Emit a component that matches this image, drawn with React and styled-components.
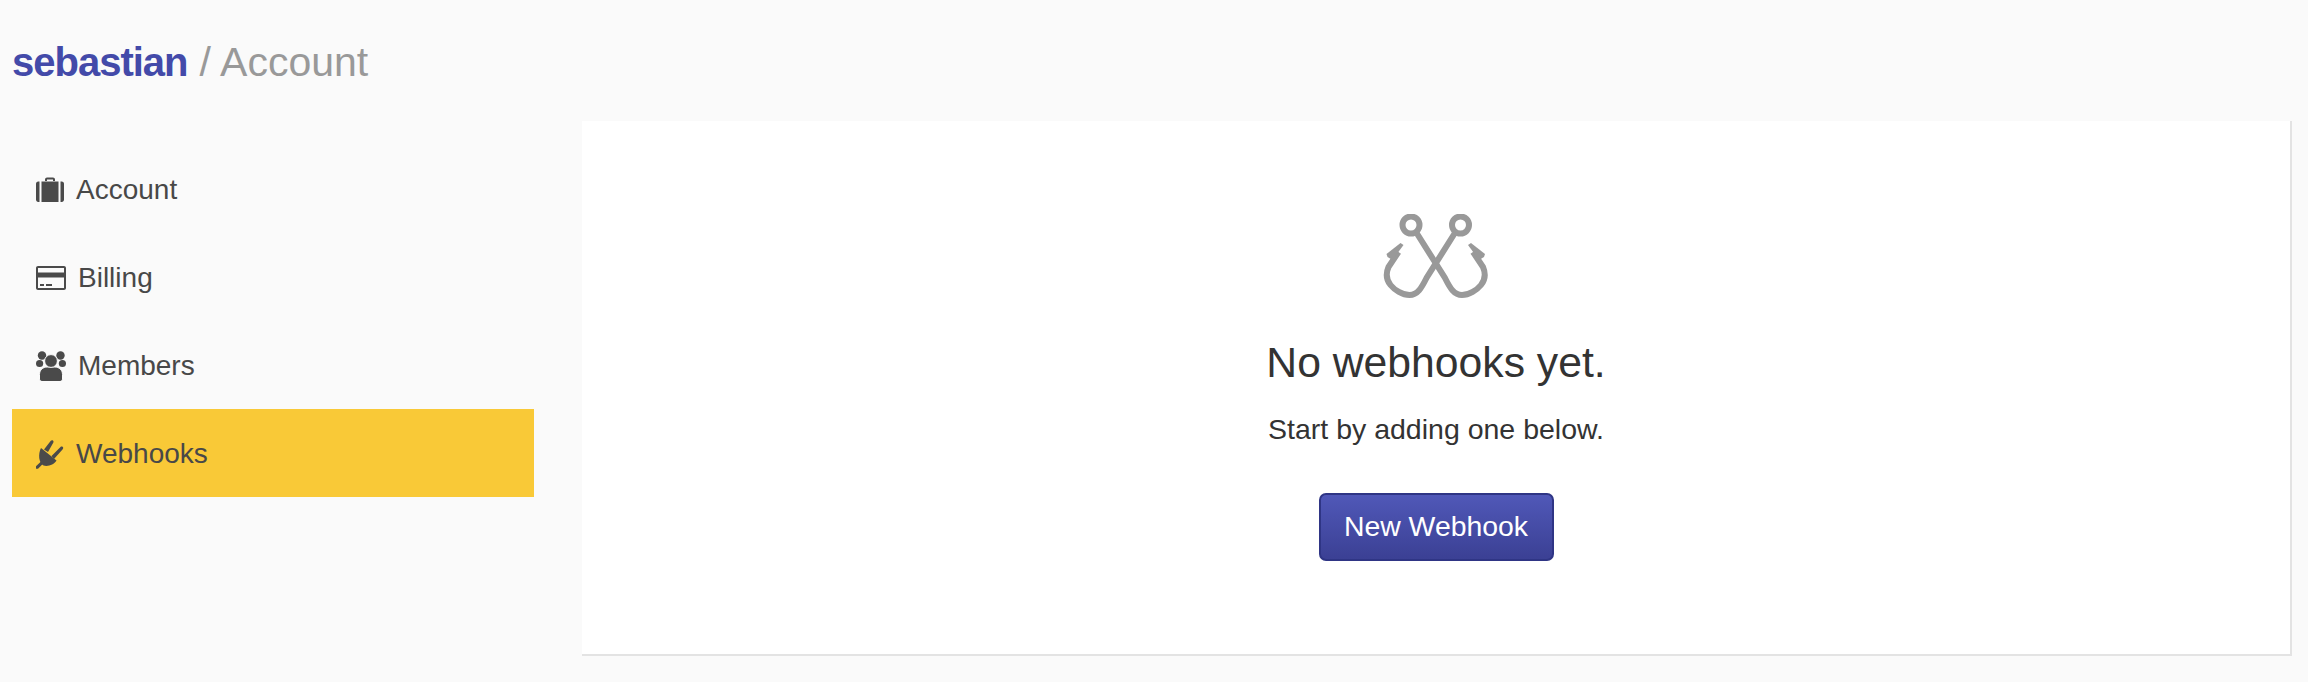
import React from 'react'
import styled, { createGlobalStyle } from 'styled-components'

const GlobalStyle = createGlobalStyle`
  html, body {
    margin: 0;
    background: #fafafa;
  }
  body {
    font-family: "Liberation Sans", Arial, sans-serif;
  }
`

const Page = styled.div`
  height: 682px;
  padding: 0 16px 0 12px;
  box-sizing: border-box;
  overflow: hidden;
`

const Header = styled.h1`
  margin: 0;
  height: 121px;
  display: flex;
  align-items: center;
  gap: 12px;
  padding-top: 3px;
  box-sizing: border-box;
  font-size: 41px;
  font-weight: 400;
  color: #999;
`

const UserLink = styled.a`
  color: #434aa9;
  font-size: 40px;
  font-weight: 700;
  letter-spacing: -1px;
  text-decoration: none;
`

const Layout = styled.div`
  display: grid;
  grid-template-columns: 522px 1710px;
  column-gap: 48px;
`

const Nav = styled.nav`
  padding-top: 24px;
  display: flex;
  flex-direction: column;
`

const NavItem = styled.a`
  height: 88px;
  box-sizing: border-box;
  padding: 2px 0 0 24px;
  display: flex;
  align-items: center;
  gap: ${(p) => p.$gap}px;
  font-size: 28px;
  color: #484848;
  text-decoration: none;
  background: ${(p) => (p.$active ? '#f9c937' : 'transparent')};

  svg {
    flex: none;
    fill: #4a4a4a;
  }
`

const Panel = styled.section`
  height: 535px;
  box-sizing: border-box;
  background: #fff;
  border-right: 2px solid #e3e3e3;
  border-bottom: 2px solid #e3e3e3;
  padding-top: 93px;
  display: flex;
  flex-direction: column;
  align-items: center;
  color: #333;
`

const Title = styled.h2`
  margin: 36px 0 0;
  font-size: 42.700px;
  line-height: 52px;
  font-weight: 400;
`

const Subtitle = styled.p`
  margin: 23px 0 0;
  font-size: 28.500px;
  line-height: 36px;
`

const NewButton = styled.button`
  margin-top: 46px;
  width: 235px;
  height: 68px;
  padding: 0 0 2px;
  border: 2px solid #2f3585;
  border-radius: 7px;
  background: linear-gradient(to bottom, #5058b8, #3b4094);
  color: #fff;
  font-family: inherit;
  font-size: 28.400px;
  cursor: pointer;
`

const BriefcaseIcon = () => (
  <svg width="28" height="26" viewBox="0 0 28 26">
    <path d="M9 4V2.500C9 1.200 10 .5 11 .5h6c1 0 2 .7 2 2V4h-2V2.500h-6V4z" />
    <path d="M3.500 4.500V25H2.200C1 25 0 24 0 22.800V6.700C0 5.500 1 4.500 2.200 4.500z" />
    <rect x="5.500" y="4.500" width="17" height="20.500" />
    <path d="M24.500 4.500h1.300C27 4.500 28 5.500 28 6.700v16.100c0 1.200-1 2.200-2.200 2.200h-1.300z" />
  </svg>
)

const CardIcon = () => (
  <svg width="30" height="24" viewBox="0 0 30 24">
    <path fillRule="evenodd" d="M2 0h26c1.100 0 2 .9 2 2v20c0 1.100-.9 2-2 2H2c-1.100 0-2-.9-2-2V2C0 .9.900 0 2 0zm0 2v4.500h26V2zm0 9.500V22h26V11.500z" />
    <rect x="4" y="18" width="4" height="2" />
    <rect x="10" y="18" width="6" height="2" />
  </svg>
)

const MembersIcon = () => (
  <svg width="30" height="30" viewBox="0 0 30 30">
    <circle cx="6" cy="4.500" r="4.200" />
    <circle cx="24.500" cy="4.500" r="4.200" />
    <circle cx="3.600" cy="12.500" r="3.600" />
    <circle cx="26.400" cy="12.500" r="3.600" />
    <path stroke="#fafafa" strokeWidth="1" d="M3.500 28v-4.500c0-4.500 3.500-7.500 7.500-7.500h8c4 0 7.500 3 7.500 7.500V28c0 1.200-1 2.500-2.500 2.500H6c-1.500 0-2.500-1.300-2.500-2.500z" />
    <circle cx="15" cy="10" r="6.400" stroke="#fafafa" strokeWidth="1" />
  </svg>
)

const PlugIcon = () => (
  <svg width="28" height="29" viewBox="0 0 28 29">
    <path d="M0 26.200 5 21.500l2 2.200-5 5H0z" />
    <path d="M5 8 20.500 20.500C18 24.500 12 27 7.500 25.500 2.500 23 2 13.500 5 8z" />
    <path d="M8 9.500 14.800.8c.8-1 2.500-.6 2.700.6.100.5 0 1-.4 1.500L12 12z" />
    <path d="M15.500 16 24.500 7c1-.9 2.800-.3 2.700 1 0 .5-.3 1-.7 1.400L18 19z" />
  </svg>
)

const HooksIcon = () => (
  <svg width="106" height="86" viewBox="0 0 106 86" fill="none" stroke="#999" strokeWidth="6">
    {[false, true].map((mirrored) => (
      <g key={String(mirrored)} transform={mirrored ? 'matrix(-1 0 0 1 105.500 0)' : undefined}>
        <circle cx="28" cy="11" r="8.500" />
        <path d="M33 18 62 64C67 74 71 81 79 81 86 81 94 76 98 71 102 66 103 60 100 53L90 38" />
        <path d="M85 31 88 29 102 40 101 43 96 46Z" fill="#999" stroke="none" />
      </g>
    ))}
  </svg>
)

const navItems = [
  { label: 'Account', icon: <BriefcaseIcon />, gap: 12 },
  { label: 'Billing', icon: <CardIcon />, gap: 12 },
  { label: 'Members', icon: <MembersIcon />, gap: 12 },
  { label: 'Webhooks', icon: <PlugIcon />, gap: 12, active: true },
]

function App() {
  return (
    <Page>
      <GlobalStyle />
      <Header>
        <UserLink href="#">sebastian</UserLink>
        <span>/ Account</span>
      </Header>
      <Layout>
        <Nav>
          {navItems.map((item) => (
            <NavItem key={item.label} href="#" $gap={item.gap} $active={item.active}>
              {item.icon}
              {item.label}
            </NavItem>
          ))}
        </Nav>
        <Panel>
          <HooksIcon />
          <Title>No webhooks yet.</Title>
          <Subtitle>Start by adding one below.</Subtitle>
          <NewButton>New Webhook</NewButton>
        </Panel>
      </Layout>
    </Page>
  )
}

export default App
